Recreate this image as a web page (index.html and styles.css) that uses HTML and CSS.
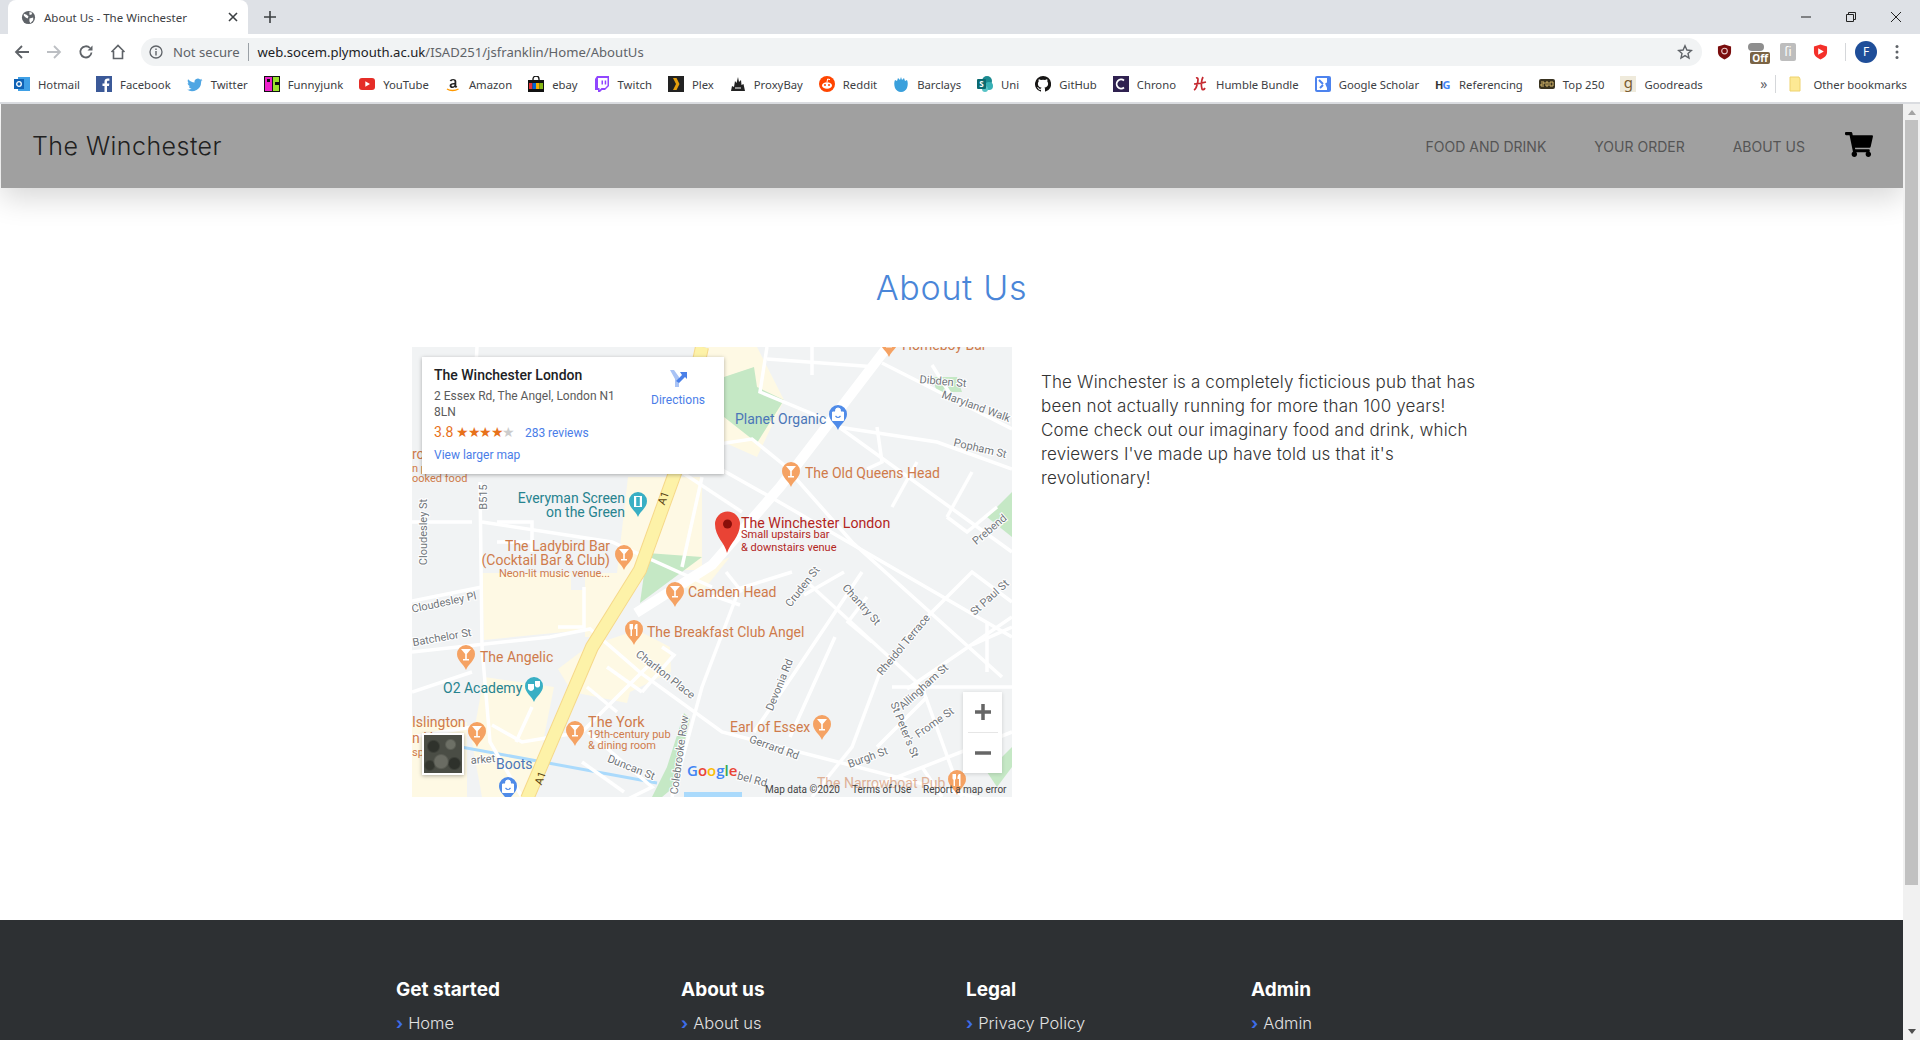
FILE: index.html
```html
<!DOCTYPE html>
<html lang="en">
<head>
  <meta charset="UTF-8">
  <title>About Us - The Winchester</title>
  <link rel="stylesheet" href="styles.css">
</head>
<body>
  <!-- browser frame -->
  <div class="tabstrip">
    <div class="tab">
      <svg class="ico" viewBox="0 0 16 16"><circle cx="8" cy="8" r="7" fill="#5f6368"/><path d="M3 4l3 1 2 2-1 2-2-1-2-2zM9 2l3 1-1 2-2 0zM9 9l4-1 0 3-3 3-1-2z" fill="#fff"/></svg>
      <span class="tab-title">About Us - The Winchester</span>
      <svg class="tab-close" viewBox="0 0 10 10"><path d="M1 1l8 8M9 1l-8 8" stroke="#3c4043" stroke-width="1.6"/></svg>
    </div>
    <svg class="new-tab" viewBox="0 0 12 12"><path d="M6 0v12M0 6h12" stroke="#3c4043" stroke-width="1.6"/></svg>
    <div class="window-btns">
      <svg viewBox="0 0 12 12"><path d="M1 6h10" stroke="#222"/></svg>
      <svg viewBox="0 0 12 12"><path d="M1.5 3.5h7v7h-7zM3.5 3.5v-2h7v7h-2" fill="none" stroke="#222"/></svg>
      <svg viewBox="0 0 12 12"><path d="M1 1l10 10M11 1l-10 10" stroke="#222"/></svg>
    </div>
  </div>

  <div class="toolbar">
    <svg class="nav-ico" viewBox="0 0 16 16"><path d="M15 8H2M8 2L2 8l6 6" fill="none" stroke="#5f6368" stroke-width="1.8"/></svg>
    <svg class="nav-ico" viewBox="0 0 16 16"><path d="M1 8h13M8 2l6 6-6 6" fill="none" stroke="#bcbfc3" stroke-width="1.8"/></svg>
    <svg class="nav-ico" viewBox="0 0 16 16"><path d="M13.5 8.5A5.6 5.6 0 1 1 12 4" fill="none" stroke="#5f6368" stroke-width="1.8"/><path d="M14.5 1.5v5h-5z" fill="#5f6368"/></svg>
    <svg class="nav-ico" viewBox="0 0 16 16"><path d="M1.5 8L8 1.5 14.5 8M3.5 7v7.5h9V7" fill="none" stroke="#5f6368" stroke-width="1.6"/></svg>
    <div class="omnibox">
      <svg class="info-ico" viewBox="0 0 14 14"><circle cx="7" cy="7" r="6" fill="none" stroke="#5f6368" stroke-width="1.3"/><path d="M7 6v4.5M7 3.4v1.6" stroke="#5f6368" stroke-width="1.4"/></svg>
      <span class="not-secure">Not secure</span>
      <span class="url"><b>web.socem.plymouth.ac.uk</b>/ISAD251/jsfranklin/Home/AboutUs</span>
      <svg class="star" viewBox="0 0 16 16"><path d="M8 1.8l1.9 4.2 4.5.5-3.4 3 1 4.5L8 11.6 4 14l1-4.5-3.4-3 4.5-.5z" fill="none" stroke="#5f6368" stroke-width="1.4"/></svg>
    </div>
    <div class="extensions">
      <svg viewBox="0 0 16 18"><path d="M8 1l7 2v6c0 4-3 6-7 8-4-2-7-4-7-8V3z" fill="#7a0d0d"/><circle cx="8" cy="8" r="3" fill="none" stroke="#e8c8c8" stroke-width="1.2"/></svg>
      <span class="ext-off"><i></i><b>Off</b></span>
      <span class="ext-grey">ſi</span>
      <svg viewBox="0 0 16 18"><path d="M8 1l7 2v6c0 4-3 6-7 8-4-2-7-4-7-8V3z" fill="#f4302a"/><path d="M5.5 5l6 3.5-6 3.5z" fill="#fff"/></svg>
      <span class="ext-divider"></span>
      <span class="avatar">F</span>
      <svg class="menu-dots" viewBox="0 0 4 16"><circle cx="2" cy="2.5" r="1.5" fill="#5f6368"/><circle cx="2" cy="8" r="1.5" fill="#5f6368"/><circle cx="2" cy="13.5" r="1.5" fill="#5f6368"/></svg>
    </div>
  </div>

  <div class="bookmarks">
    <a class="bm"><svg viewBox="0 0 16 16"><rect x="4" y="1" width="12" height="14" fill="#3fa0e6"/><rect y="3" width="10" height="10" fill="#0f62b5"/><circle cx="5" cy="8" r="2.3" fill="none" stroke="#fff" stroke-width="1.3"/></svg>Hotmail</a>
    <a class="bm"><svg viewBox="0 0 16 16"><rect width="16" height="16" fill="#3b5998"/><path d="M11 16V10h2l.3-2.5H11V6c0-.8.3-1.2 1.2-1.2h1.2V2.6C13 2.5 12.4 2.5 11.7 2.5 9.8 2.5 8.5 3.6 8.5 5.7v1.8h-2V10h2v6z" fill="#fff"/></svg>Facebook</a>
    <a class="bm"><svg viewBox="0 0 16 16"><path d="M15.5 4c-.6.3-1.2.4-1.8.5.6-.4 1.1-1 1.4-1.7-.6.4-1.3.6-2 .8A3.2 3.2 0 0 0 7.6 6.5C5 6.4 2.7 5.1 1.1 3.2c-.8 1.5-.4 3.3 1 4.3-.5 0-1-.2-1.400-.4 0 1.600 1.100 2.900 2.600 3.200-.5.100-1 .2-1.500.1.400 1.300 1.600 2.200 3 2.200A6.500 6.500 0 0 1 0 13.600 9.100 9.100 0 0 0 14.100 5.500c.6-.4 1-.9 1.400-1.500z" fill="#4fa6e3"/></svg>Twitter</a>
    <a class="bm"><svg viewBox="0 0 16 16"><rect width="16" height="16" fill="#111"/><rect x="1" y="1" width="7" height="14" fill="#ee22cc"/><rect x="9" y="1" width="6" height="14" fill="#9be22d"/><rect x="3" y="3" width="3" height="3" fill="#111"/><rect x="11" y="6" width="4" height="3" fill="#111"/></svg>Funnyjunk</a>
    <a class="bm"><svg viewBox="0 0 16 16"><rect y="2" width="16" height="12" rx="3" fill="#e52d27"/><path d="M6.3 5.2L11 8l-4.700 2.800z" fill="#fff"/></svg>YouTube</a>
    <a class="bm"><svg viewBox="0 0 16 16"><path d="M9.500 7V5.500C9.500 4 7 3.800 6.500 5.200L4.700 5C5.200 2.300 11.300 2.300 11.300 5.300v4.500l1 1-1.400 1.200-1-1c-1.700 1.800-5.300 1.300-5.300-1.300 0-2.300 2.300-3 5.700-2.700zm0 1.400c-2-.1-3 .2-3 1.200 0 1.300 2.400 1.200 3-.7z" fill="#222"/><path d="M2 13c3 2 8 2 11.500 0" fill="none" stroke="#f90" stroke-width="1.3"/></svg>Amazon</a>
    <a class="bm"><svg viewBox="0 0 16 16"><path d="M5 5V3a3 3 0 0 1 6 0v2" fill="none" stroke="#111" stroke-width="1.3"/><rect y="4" width="16" height="12" fill="#111"/><rect x="1" y="7" width="3.5" height="6" fill="#e53238"/><rect x="4.5" y="7" width="3.5" height="6" fill="#0064d2"/><rect x="8" y="7" width="3.5" height="6" fill="#f5af02"/><rect x="11.5" y="7" width="3.5" height="6" fill="#86b817"/></svg>ebay</a>
    <a class="bm"><svg viewBox="0 0 16 16"><path d="M3 0h12v10l-4 4H8l-2 2H4v-2H1V3z" fill="#9146ff"/><path d="M4 2h9.500v7.500L11 12H7.500L5.500 14v-2H4z" fill="#fff"/><path d="M7.500 4.500H9v4H7.500zM10.700 4.500h1.500v4h-1.500z" fill="#9146ff"/></svg>Twitch</a>
    <a class="bm"><svg viewBox="0 0 16 16"><rect width="16" height="16" fill="#222"/><path d="M5 2h3.500l3 6-3 6H5l3-6z" fill="#e5a00d"/></svg>Plex</a>
    <a class="bm"><svg viewBox="0 0 16 16"><path d="M1 15l1-5 2 1 1-6 1.500 2L8 1l1 5 2-2 .5 5 2-1 1.500 7z" fill="#222"/><path d="M5 12h6" stroke="#fff"/></svg>ProxyBay</a>
    <a class="bm"><svg viewBox="0 0 16 16"><circle cx="8" cy="8" r="8" fill="#ff4500"/><ellipse cx="8" cy="9.500" rx="5" ry="3.300" fill="#fff"/><circle cx="6" cy="9" r="1" fill="#ff4500"/><circle cx="10" cy="9" r="1" fill="#ff4500"/><path d="M8 6l.6-3 2.400.6" fill="none" stroke="#fff"/></svg>Reddit</a>
    <a class="bm"><svg viewBox="0 0 16 16"><path d="M8 16c-3 0-5-2-6-4-1-3-1-6 0-8l2 1 1-3 2 2 1-3 1 3 2-2 1 3 2-1c1 2 1 5 0 8-1 2-3 4-6 4z" fill="#3aa0dc"/></svg>Barclays</a>
    <a class="bm"><svg viewBox="0 0 16 16"><circle cx="10" cy="5" r="5" fill="#1b8a90"/><circle cx="12" cy="10" r="4" fill="#37b0b5"/><circle cx="8" cy="13" r="3" fill="#57c3c6"/><rect y="3" width="9" height="10" rx="1" fill="#0b6a70"/><text x="2.200" y="11" class="uni-s">S</text></svg>Uni</a>
    <a class="bm"><svg viewBox="0 0 16 16"><path d="M8 0a8 8 0 0 0-2.500 15.600c.4.100.5-.2.500-.4v-1.400c-2.200.5-2.700-1-2.700-1-.4-.9-.9-1.200-.9-1.200-.7-.5.100-.5.100-.5.800.100 1.200.8 1.200.8.700 1.200 1.900.9 2.300.7.100-.5.300-.9.500-1.100-1.800-.2-3.600-.9-3.600-4 0-.9.300-1.600.8-2.100-.1-.2-.4-1 .1-2.100 0 0 .7-.2 2.200.8a7.500 7.500 0 0 1 4 0c1.500-1 2.200-.8 2.200-.8.400 1.100.2 1.900.1 2.100.5.600.8 1.300.8 2.100 0 3.100-1.900 3.800-3.700 4 .3.300.6.800.6 1.500v2.200c0 .2.100.5.600.4A8 8 0 0 0 8 0z" fill="#161514"/></svg>GitHub</a>
    <a class="bm"><svg viewBox="0 0 16 16"><rect width="16" height="16" fill="#2f2150"/><path d="M11 4.500a4.500 4.500 0 1 0 0 7" fill="none" stroke="#fff" stroke-width="1.8"/></svg>Chrono</a>
    <a class="bm"><svg viewBox="0 0 16 16"><path d="M4 2c3-1 2 3 1 7-.5 2-1 4-3 5M11 1c-2 4-2 8-1 12 .3 1 2 1 3-1M2 8c4 0 8-1 12-2" fill="none" stroke="#c5282f" stroke-width="1.7"/></svg>Humble Bundle</a>
    <a class="bm"><svg viewBox="0 0 16 16"><rect width="16" height="16" rx="2" fill="#4d83ee"/><rect x="2" y="2" width="10" height="12" fill="#fff"/><path d="M4 4l4 4M11 7l3 7M5 12l3-3" stroke="#4d83ee" stroke-width="2"/></svg>Google Scholar</a>
    <a class="bm"><span class="hg-ico"><b>H</b><i>G</i></span>Referencing</a>
    <a class="bm"><svg viewBox="0 0 16 16"><rect y="3" width="16" height="10" rx="2" fill="#3a3320"/><path d="M2 6h3v2H2v2h3M7 6h2v4H7zM11 6h3v4h-3z" fill="none" stroke="#d5b768"/></svg>Top 250</a>
    <a class="bm"><span class="gr-ico">g</span>Goodreads</a>
    <span class="bm-more">»</span>
    <span class="bm-divider"></span>
    <a class="bm bm-other"><svg viewBox="0 0 16 16"><path d="M1 1h9l1 2v12H1z" fill="#fde994" stroke="#eed26e"/></svg>Other bookmarks</a>
  </div>

  <div class="viewport">
    <div class="page">
      <nav class="navbar">
        <a class="brand">The Winchester</a>
        <ul class="nav-links">
          <li>FOOD AND DRINK</li>
          <li>YOUR ORDER</li>
          <li>ABOUT US</li>
        </ul>
        <svg class="cart" viewBox="0 0 576 512"><path d="M528 301l47-208c3-15-8-29-23-29H159l-9-45C148 8 138 0 126 0H24C11 0 0 11 0 24v16c0 13 11 24 24 24h70l70 343c-17 10-28 28-28 49 0 31 25 56 56 56s56-25 56-56c0-16-6-30-17-40h210c-11 10-17 24-17 40 0 31 25 56 56 56s56-25 56-56c0-22-13-41-32-50l5-24c4-15-8-29-23-29H211l-7-32h301c11 0 21-8 23-19z" fill="#000"/></svg>
      </nav>

      <main class="about">
        <h1 class="about-title">About Us</h1>
        <div class="about-row">
          <div class="map">
            <svg class="map-canvas" viewBox="0 0 600 450">
              <defs>
                <g id="pin-glass"><path d="M0 13C-2 7-9 4-9-3A9 9 0 1 1 9-3C9 4 2 7 0 13Z" class="f-orange"/><path d="M-5-8H5L.8-3V2H3V3.500H-3V2H-.8V-3Z" fill="#fff"/></g>
                <g id="pin-food"><path d="M0 13C-2 7-9 4-9-3A9 9 0 1 1 9-3C9 4 2 7 0 13Z" class="f-orange"/><path d="M-4.500-8v4c0 1 .5 1.500 1 1.800V4h1.500V-2.200c.5-.3 1-.8 1-1.800v-4M2-8c-1.500 1-1.500 3-1.500 5H2V4h1.500V-8Z" fill="#fff"/></g>
                <g id="pin-shop"><path d="M0 13C-2 7-9 4-9-3A9 9 0 1 1 9-3C9 4 2 7 0 13Z" class="f-blue"/><path d="M-5.500-5H5.500V3.500H-5.500ZM-2.500-5V-6.500A2.500 2.500 0 0 1 2.500-6.500V-5" fill="#fff" stroke="#fff"/><path d="M-2.500-1Q0 2 2.500-1" fill="none" stroke="#4f8be8" stroke-width="1.2"/></g>
                <g id="pin-film"><path d="M0 13C-2 7-9 4-9-3A9 9 0 1 1 9-3C9 4 2 7 0 13Z" class="f-teal"/><path d="M-4-8H4V3H-4Z" fill="#fff"/><path d="M-1.800-7H1.800V2H-1.800Z" fill="#39afc4"/></g>
                <g id="pin-show"><path d="M0 13C-2 7-9 4-9-3A9 9 0 1 1 9-3C9 4 2 7 0 13Z" class="f-teal"/><path d="M-6-5H0V0Q-3 4-6 0ZM1-8H6V-3Q3.500 0 1-3Z" fill="#fff"/></g>
              </defs>

              <rect width="600" height="450" fill="#f1f3f4"/>

              <!-- land use -->
              <g class="beige">
                <path d="M70 226H159V243H173V283L72 293Z"/>
                <path d="M216 130H290V223H235L190 290H173V226H205Z"/>
                <path d="M175 300L225 283 258 300 259 325 218 345 215 356 160 345 146 322Z"/>
                <path d="M72 330 142 340 130 400 115 450H70L60 395Z"/>
                <path d="M0 375H55V450H0Z"/>
                <path d="M296 0H345L372 53 345 110 300 90 290 30Z"/>
                <path d="M290 223 318 210 290 245 270 240Z"/>
              </g>
              <g class="green">
                <path d="M235 206 290 210 228 256Z"/>
                <path d="M312 30 342 20 345 40 372 53 345 96 312 70Z"/>
                <path d="M255 420 272 366 278 372 262 440 250 450 240 450Z"/>
                <path d="M520 30h25l5 15h-25Z"/>
                <path d="M575 170 600 145V190Z"/>
                <path d="M575 425 600 400V420L585 440Z"/>
              </g>
              <path class="canal" d="M49 400 245 436"/>
              <path class="river" d="M272 448H330"/>

              <!-- streets -->
              <g class="road">
                <path d="M355 0 348 45 420 75 600 205"/>
                <path d="M470 16 600 82"/>
                <path d="M355 12 465 20"/>
                <path d="M426 80 525 95 600 122"/>
                <path d="M300 98 340 92 372 118 440 195 590 330"/>
                <path d="M305 120 362 152 600 290"/>
                <path d="M262 120 330 165"/>
                <path d="M400 0V28M520 18 540 50"/>
                <path d="M465 80 470 115 455 122"/>
                <path d="M505 115 480 160 M560 125 535 170"/>
                <path d="M585 160 555 185 535 170"/>
                <path d="M290 130 270 220"/>
                <path d="M65 0 60 90 M68 135 70 300 78 395 110 450"/>
                <path d="M0 175H60 M85 175H120V205 M85 195H120"/>
                <path d="M70 175 200 195 300 240"/>
                <path d="M0 254 70 240"/>
                <path d="M0 305 138 290 178 282 230 327 310 385 600 460"/>
                <path d="M0 345 60 325 M0 390 60 380"/>
                <path d="M146 280 172 280 172 240"/>
                <path d="M240 315 205 350 170 385 110 395 80 378"/>
                <path d="M120 360 104 395"/>
                <path d="M195 320 230 345 M175 340 205 365"/>
                <path d="M330 245 314 225 M328 258 305 250"/>
                <path d="M328 240 290 340 260 450"/>
                <path d="M250 300 262 308 230 345"/>
                <path d="M432 225 392 248 M450 225 383 325 342 385"/>
                <path d="M395 235 510 340 550 450"/>
                <path d="M423 290 378 390 M380 225 300 250"/>
                <path d="M455 250 436 275 460 295"/>
                <path d="M470 320 440 400 400 450"/>
                <path d="M495 290 560 225 600 255"/>
                <path d="M495 342 600 270"/>
                <path d="M480 340 600 340 M575 275 575 325"/>
                <path d="M465 400 515 350 M460 440 600 385"/>
                <path d="M560 298 600 280"/>
                <path d="M176 385 240 440 210 455"/>
                <path d="M170 415 212 445"/>
                <path d="M510 420 530 450"/>
              </g>
              <path class="road-main" d="M224 266 300 218 368 140 473 3 482 -8"/>
              <path class="road-a-edge" d="M115 452 180 300 228 223 263 126 290 0"/>
              <path class="road-a" d="M115 452 180 300 228 223 263 126 290 0"/>

              <!-- streets names -->
              <g class="street-name">
                <text x="531" y="38" transform="rotate(5 531 35)">Dibden St</text>
                <text x="564" y="63" transform="rotate(20 564 60)">Maryland Walk</text>
                <text x="568" y="105" transform="rotate(13 568 102)">Popham St</text>
                <text x="72" y="153" transform="rotate(-90 72 150)">B515</text>
                <text x="12" y="188" transform="rotate(-90 12 185)">Cloudesley St</text>
                <text x="578" y="186" transform="rotate(-40 578 183)">Prebend</text>
                <text x="391" y="243" transform="rotate(-52 391 240)">Cruden St</text>
                <text x="449" y="261" transform="rotate(48 449 258)">Chantry St</text>
                <text x="578" y="254" transform="rotate(-42 578 251)">St Paul St</text>
                <text x="32" y="259" transform="rotate(-12 32 256)">Cloudesley Pl</text>
                <text x="30" y="294" transform="rotate(-10 30 291)">Batchelor St</text>
                <text x="492" y="301" transform="rotate(-50 492 298)">Rheidol Terrace</text>
                <text x="253" y="331" transform="rotate(38 253 328)">Charlton Place</text>
                <text x="368" y="341" transform="rotate(-68 368 338)">Devonia Rd</text>
                <text x="512" y="343" transform="rotate(-42 512 340)">Allingham St</text>
                <text x="523" y="379" transform="rotate(-35 523 376)">Frome St</text>
                <text x="492" y="386" transform="rotate(68 492 383)">St Peter's St</text>
                <text x="362" y="404" transform="rotate(20 362 401)">Gerrard Rd</text>
                <text x="456" y="414" transform="rotate(-20 456 411)">Burgh St</text>
                <text x="219" y="424" transform="rotate(22 219 421)">Duncan St</text>
                <text x="268" y="411" transform="rotate(-82 268 408)">Colebrooke Row</text>
                <text x="71" y="416" transform="rotate(-5 71 413)">arket</text>
                <text x="340" y="436" transform="rotate(15 340 433)">bel Rd</text>
              </g>
              <text class="a-label" x="251" y="155" transform="rotate(-70 251 151)">A1</text>
              <text class="a-label" x="128" y="435" transform="rotate(-70 128 431)">A1</text>

              <!-- places -->
              <use href="#pin-glass" x="477" y="-3"/>
              <use href="#pin-shop" x="426" y="70"/>
              <use href="#pin-glass" x="379" y="127"/>
              <use href="#pin-film" x="226" y="157"/>
              <use href="#pin-glass" x="212" y="210"/>
              <use href="#pin-glass" x="263" y="247"/>
              <use href="#pin-food" x="222" y="285"/>
              <use href="#pin-glass" x="54" y="310"/>
              <use href="#pin-show" x="122" y="342"/>
              <use href="#pin-glass" x="65" y="387"/>
              <use href="#pin-glass" x="163" y="386"/>
              <use href="#pin-glass" x="410" y="380"/>
              <use href="#pin-shop" x="96" y="442"/>
              <use href="#pin-food" x="545" y="435"/>

              <g class="poi-orange">
                <text x="490" y="3">Homeboy Bar</text>
                <text x="393" y="131">The Old Queens Head</text>
                <text class="end" x="198" y="204">The Ladybird Bar</text>
                <text class="end" x="198" y="218">(Cocktail Bar &amp; Club)</text>
                <text class="small end" x="198" y="230">Neon-lit music venue...</text>
                <text x="0" y="112">ro</text>
                <text class="small" x="0" y="125">n p</text>
                <text class="small" x="0" y="135">ooked food</text>
                <text x="276" y="250">Camden Head</text>
                <text x="235" y="290">The Breakfast Club Angel</text>
                <text x="68" y="315">The Angelic</text>
                <text x="0" y="380">Islington</text>
                <text x="0" y="396">n H</text>
                <text class="small" x="0" y="409">sp</text>
                <text class="york" x="176" y="380">The York</text>
                <text class="small" x="176" y="391">19th-century pub</text>
                <text class="small" x="176" y="402">&amp; dining room</text>
                <text x="318" y="385">Earl of Essex</text>
                <text class="faded" x="405" y="441">The Narrowboat Pub</text>
              </g>
              <g class="poi-blue">
                <text x="323" y="77">Planet Organic</text>
                <text x="84" y="422">Boots</text>
              </g>
              <g class="poi-teal">
                <text class="end" x="213" y="156">Everyman Screen</text>
                <text class="end" x="213" y="170">on the Green</text>
                <text x="31" y="346">O2 Academy</text>
              </g>

              <!-- the pub itself -->
              <path d="M315 206C313 196 303 190 303 177A12.500 12.500 0 1 1 328 177C328 190 318 196 315 206Z" fill="#e94335"/>
              <circle cx="315.500" cy="177" r="4.500" fill="#8a0f0a"/>
              <g class="poi-red">
                <text x="329" y="181">The Winchester London</text>
                <text class="small" x="329" y="191">Small upstairs bar</text>
                <text class="small" x="329" y="204">&amp; downstairs venue</text>
              </g>

              <text class="google" x="275" y="429"><tspan fill="#4285f4">G</tspan><tspan fill="#ea4335">o</tspan><tspan fill="#fbbc05">o</tspan><tspan fill="#4285f4">g</tspan><tspan fill="#34a853">l</tspan><tspan fill="#ea4335">e</tspan></text>
              <g class="attribution">
                <text x="353" y="446">Map data ©2020</text>
                <text x="440" y="446">Terms of Use</text>
                <text x="511" y="446">Report a map error</text>
              </g>
            </svg>

            <div class="place-card">
              <div class="place-info">
                <div class="place-name">The Winchester London</div>
                <div class="place-addr">2 Essex Rd, The Angel, London N1 8LN</div>
                <div class="place-rating"><span class="score">3.8</span> <span class="stars">★★★★<i>★</i></span> <a class="link reviews">283 reviews</a></div>
                <a class="link larger">View larger map</a>
              </div>
              <div class="place-dir">
                <svg viewBox="0 0 20 20"><path d="M2 2H6L11 9V19H7V11Z" fill="#a9c3f5"/><path d="M8 13 14 7 12 4H19V11L17 9 11 15Z" fill="#4a80e8"/></svg>
                <a class="link">Directions</a>
              </div>
            </div>
            <div class="sat-thumb"></div>
            <div class="zoom-ctl">
              <svg viewBox="0 0 20 20"><path d="M10 2v16M2 10h16" stroke="#666" stroke-width="3.5"/></svg>
              <span class="zoom-sep"></span>
              <svg viewBox="0 0 20 20"><path d="M2 10h16" stroke="#666" stroke-width="3.5"/></svg>
            </div>
          </div>
          <p class="about-text">The Winchester is a completely ficticious pub that has been not actually running for more than 100 years! Come check out our imaginary food and drink, which reviewers I've made up have told us that it's revolutionary!</p>
        </div>
      </main>

      <footer class="site-footer">
        <div class="footer-col"><h4>Get started</h4><a><span>›</span>Home</a></div>
        <div class="footer-col"><h4>About us</h4><a><span>›</span>About us</a></div>
        <div class="footer-col"><h4>Legal</h4><a><span>›</span>Privacy Policy</a></div>
        <div class="footer-col"><h4>Admin</h4><a><span>›</span>Admin</a></div>
      </footer>
    </div>

    <div class="scrollbar">
      <span class="sb-up"></span>
      <span class="sb-thumb"></span>
      <span class="sb-down"></span>
    </div>
  </div>
</body>
</html>
```

FILE: styles.css
```css
* {
  box-sizing: border-box;
}

html, body {
  height: 100%;
}

body {
  margin: 0;
  height: 1040px;
  overflow: hidden;
  display: flex;
  flex-direction: column;
  font-family: "Noto Sans", sans-serif;
  background-color: white;
}

/* browser frame */
.tabstrip {
  height: 34px;
  flex: none;
  display: flex;
  align-items: flex-end;
  padding-left: 8px;
  background-color: #dee1e6;
}

.tab {
  width: 240px;
  height: 34px;
  display: flex;
  align-items: center;
  padding: 0 10px 0 13px;
  background-color: white;
  border-radius: 8px 8px 0 0;
  font-size: 11.5px;
  color: #3c4043;
}

.ico {
  width: 15px;
  height: 15px;
  margin-right: 8px;
}

.tab-title {
  flex: 1;
  white-space: nowrap;
}

.tab-close {
  width: 10px;
  height: 10px;
}

.new-tab {
  width: 12px;
  height: 12px;
  margin: 0 0 11px 16px;
}

.window-btns {
  margin-left: auto;
  display: flex;
  gap: 33px;
  padding: 0 18px 11px 0;
}

.window-btns svg {
  width: 12px;
  height: 12px;
}

.toolbar {
  height: 36px;
  flex: none;
  display: flex;
  align-items: center;
  padding-left: 14px;
  background-color: white;
}

.nav-ico {
  width: 16px;
  height: 16px;
  margin-right: 16px;
}

.omnibox {
  width: 1561px;
  height: 28px;
  margin-left: -1px;
  display: flex;
  align-items: center;
  padding: 0 9px 0 8px;
  background-color: #f1f3f4;
  border-radius: 14px;
  font-size: 13.1px;
  white-space: nowrap;
}

.info-ico {
  width: 14px;
  height: 14px;
  margin-right: 10px;
}

.not-secure {
  padding-right: 8px;
  margin-right: 9px;
  border-right: 1px solid #9aa0a6;
  color: #5f6368;
  line-height: 18px;
}

.url {
  flex: 1;
  color: #5f6368;
}

.url b {
  font-weight: normal;
  color: #202124;
}

.star {
  width: 16px;
  height: 16px;
}

.extensions {
  flex: 1;
  display: flex;
  align-items: center;
  padding-left: 15px;
}

.extensions > svg {
  width: 15px;
  height: 18px;
  margin-right: 17px;
}

.extensions > svg.menu-dots {
  width: 4px;
  height: 16px;
  margin: 0 0 0 18px;
}

.ext-off {
  width: 22px;
  height: 22px;
  margin: 2px 10px 0 -1px;
  position: relative;
}

.ext-off i {
  position: absolute;
  left: 0;
  top: 1px;
  width: 16px;
  height: 8px;
  border-radius: 4px;
  background-color: #8e8e8e;
}

.ext-off b {
  position: absolute;
  right: 0;
  bottom: 0;
  padding: 0 2px;
  font-size: 10px;
  line-height: 12px;
  color: white;
  background-color: #7a6344;
  border-radius: 2px;
}

.ext-grey {
  width: 16px;
  height: 18px;
  margin-right: 17px;
  text-align: center;
  font-size: 12px;
  line-height: 18px;
  color: white;
  background-color: #bdbdbd;
  border-radius: 2px;
}

.ext-divider {
  width: 1px;
  height: 18px;
  margin-right: 9px;
  background-color: #d5d7da;
}

.avatar {
  width: 22px;
  height: 22px;
  border-radius: 50%;
  text-align: center;
  font-size: 12px;
  line-height: 22px;
  color: white;
  background-color: #1f4e99;
}

/* bookmarks bar */
.bookmarks {
  height: 34px;
  flex: none;
  display: flex;
  align-items: center;
  gap: 16px;
  padding: 0 0 4px 14px;
  background-color: white;
  border-bottom: 2px solid #dadce0;
  font-size: 11.3px;
  color: #3c4043;
  white-space: nowrap;
}

.bm {
  display: flex;
  align-items: center;
  gap: 8px;
}

.bm svg {
  width: 16px;
  height: 16px;
  flex: none;
}

.uni-s {
  font-size: 8px;
  font-weight: bold;
  fill: white;
}

.hg-ico {
  width: 16px;
  font-size: 11px;
  font-weight: bold;
  letter-spacing: -1px;
  color: #333;
}

.hg-ico b {
  font-weight: bold;
}

.hg-ico i {
  font-style: normal;
  color: #4285f4;
}

.gr-ico {
  width: 16px;
  height: 16px;
  text-align: center;
  font-size: 15px;
  line-height: 12px;
  color: #7a5c2e;
  background-color: #efeadb;
}

.bm-more {
  margin-left: auto;
  font-size: 14px;
  line-height: 14px;
  color: #5f6368;
}

.bm-divider {
  width: 1px;
  height: 18px;
  margin-left: -8px;
  background-color: #d5d7da;
}

.bm-other {
  margin: 0 13px 0 -3px;
}

/* page */
.viewport {
  flex: 1;
  min-height: 0;
  display: flex;
}

.page {
  flex: 1;
  min-width: 0;
  overflow: hidden;
}

.navbar {
  height: 84px;
  margin-left: 1px;
  display: flex;
  align-items: center;
  padding: 0 30px 0 31px;
  background-color: #a0a0a0;
  box-shadow: 0 10px 30px rgba(0, 0, 0, 0.16);
}

.brand {
  font-family: Inter, sans-serif;
  font-size: 25px;
  font-weight: 300;
  letter-spacing: 0.45px;
  color: #212121;
}

.nav-links {
  margin: 0 0 0 auto;
  padding: 0;
  list-style: none;
  display: flex;
  gap: 48px;
  font-family: Inter, sans-serif;
  font-size: 14px;
  font-weight: 400;
  color: #555;
}

.cart {
  width: 28px;
  height: 25px;
  margin: -4px 0 0 40px;
}

.about {
  height: 732px;
}

.about-title {
  margin: 0;
  padding-top: 80px;
  text-align: center;
  font-family: Inter, sans-serif;
  font-size: 34px;
  font-weight: 300;
  letter-spacing: 0.7px;
  line-height: 40px;
  color: #4a86d8;
}

.about-row {
  display: flex;
  gap: 29px;
  padding: 39px 0 0 412px;
}

.map {
  width: 600px;
  height: 450px;
  flex: none;
  position: relative;
  overflow: hidden;
}

.map-canvas {
  display: block;
  width: 600px;
  height: 450px;
  font-family: Roboto, sans-serif;
}

.about-text {
  width: 445px;
  margin: 23px 0 0;
  font-family: Inter, sans-serif;
  font-size: 17px;
  font-weight: 300;
  letter-spacing: 0.15px;
  line-height: 24px;
  color: #333;
}

/* map drawing */
.beige path { fill: #fef9e4; }
.green path { fill: #c5e8c5; }
.canal { fill: none; stroke: #aadafc; stroke-width: 3; }
.river { fill: none; stroke: #aadafc; stroke-width: 6; }
.road { fill: none; stroke: white; stroke-width: 3.5; }
.road-main { fill: none; stroke: white; stroke-width: 10; }
.road-a { fill: none; stroke: #fdf2a8; stroke-width: 12; }
.road-a-edge { fill: none; stroke: #f6d98a; stroke-width: 14; }
.f-orange { fill: #f5a263; }
.f-blue { fill: #4f8be8; }
.f-teal { fill: #39afc4; }

.street-name text {
  font-size: 11px;
  fill: #70757a;
  text-anchor: middle;
  stroke: white;
  stroke-width: 2px;
  paint-order: stroke;
}

.a-label {
  font-size: 11px;
  fill: #5a4413;
  text-anchor: middle;
}

.poi-orange text { font-size: 14px; fill: #cf7b4b; }
.poi-blue text { font-size: 14px; fill: #4b76b8; }
.poi-teal text { font-size: 14px; fill: #27838f; }
.poi-red text { font-size: 14.2px; fill: #b3261e; }
.poi-orange .small,
.poi-red .small { font-size: 11px; }
.poi-orange .york { font-size: 14.5px; }
.poi-orange .end,
.poi-teal .end { text-anchor: end; }
.poi-orange .faded { opacity: 0.55; }

.google {
  font-family: "Open Sans", sans-serif;
  font-size: 15px;
  font-weight: 600;
}

.attribution text {
  font-size: 10px;
  fill: #444;
}

/* overlays on the map */
.place-card {
  position: absolute;
  left: 10px;
  top: 10px;
  width: 302px;
  height: 117px;
  display: flex;
  padding: 9px 16px 0 12px;
  background-color: white;
  box-shadow: 0 1px 4px rgba(0, 0, 0, 0.3);
  font-family: Roboto, sans-serif;
  font-size: 12px;
  color: #5b5b5b;
}

.place-info {
  flex: 1;
  line-height: 15.5px;
}

.place-name {
  margin-bottom: 5px;
  font-size: 14px;
  font-weight: 500;
  line-height: 18px;
  color: #202124;
}

.place-addr {
  width: 190px;
}

.place-rating {
  margin-top: 3px;
  line-height: 18px;
}

.score {
  font-size: 14px;
  color: #e7711b;
}

.stars {
  font-size: 14px;
  letter-spacing: -1.5px;
  color: #e7711b;
}

.stars i {
  font-style: normal;
  color: #ccc;
}

.link {
  color: #4a7de8;
}

.reviews {
  margin-left: 8px;
}

.larger {
  display: block;
  margin-top: 6px;
}

.place-dir {
  width: 60px;
  text-align: center;
}

.place-dir svg {
  display: block;
  width: 20px;
  height: 20px;
  margin: 2px auto 5px;
}

.sat-thumb {
  position: absolute;
  left: 10px;
  top: 386px;
  width: 42px;
  height: 42px;
  border: 2px solid white;
  background-color: #4a4d45;
  background-image:
    radial-gradient(circle at 25% 30%, #2f322c 0 5px, transparent 7px),
    radial-gradient(circle at 70% 25%, #6d7066 0 4px, transparent 6px),
    radial-gradient(circle at 45% 70%, #6a6c63 0 6px, transparent 8px),
    radial-gradient(circle at 80% 75%, #2e312b 0 5px, transparent 7px),
    radial-gradient(circle at 15% 80%, #33362f 0 4px, transparent 6px);
  box-shadow: 0 1px 4px rgba(0, 0, 0, 0.3);
}

.zoom-ctl {
  position: absolute;
  left: 551px;
  top: 345px;
  width: 39px;
  height: 81px;
  display: flex;
  flex-direction: column;
  align-items: center;
  padding-top: 10px;
  background-color: white;
  box-shadow: 0 1px 4px rgba(0, 0, 0, 0.15);
}

.zoom-ctl svg {
  width: 20px;
  height: 20px;
}

.zoom-sep {
  width: 30px;
  height: 1px;
  margin: 10px 0;
  background-color: #e6e6e6;
}

/* footer */
.site-footer {
  height: 300px;
  display: grid;
  grid-template-columns: repeat(4, 285px);
  padding: 58px 0 0 396px;
  background-color: #2d3033;
  font-family: Inter, sans-serif;
}

.footer-col h4 {
  margin: 0 0 9px;
  font-size: 19px;
  font-weight: 700;
  line-height: 24px;
  color: white;
}

.footer-col a {
  font-size: 16.5px;
  font-weight: 300;
  line-height: 24px;
  color: #e2e2e2;
}

.footer-col span {
  margin-right: 5px;
  font-weight: 700;
  color: #3d6dea;
}

/* fake window scrollbar */
.scrollbar {
  width: 17px;
  flex: none;
  display: flex;
  flex-direction: column;
  align-items: center;
  background-color: #f1f1f1;
}

.sb-up,
.sb-down {
  width: 0;
  height: 0;
  flex: none;
  border-left: 4px solid transparent;
  border-right: 4px solid transparent;
}

.sb-up {
  margin: 6px 0 5px;
  border-bottom: 5px solid #a3a3a3;
}

.sb-thumb {
  width: 13px;
  height: 765px;
  background-color: #c1c1c1;
}

.sb-down {
  margin-top: auto;
  margin-bottom: 6px;
  border-top: 5px solid #505050;
}
```
